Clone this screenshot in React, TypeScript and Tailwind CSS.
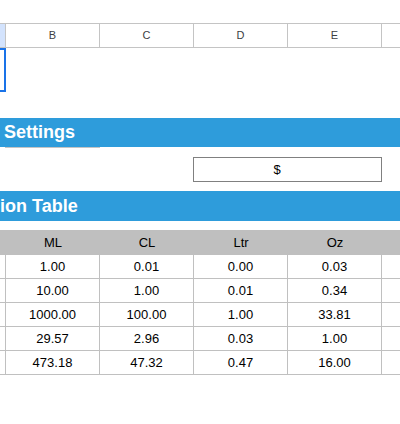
const cols = ['B', 'C', 'D', 'E'];

const units = ['ML', 'CL', 'Ltr', 'Oz'];

const rows = [
  ['1.00', '0.01', '0.00', '0.03'],
  ['10.00', '1.00', '0.01', '0.34'],
  ['1000.00', '100.00', '1.00', '33.81'],
  ['29.57', '2.96', '0.03', '1.00'],
  ['473.18', '47.32', '0.47', '16.00'],
];

export default function App() {
  return (
    <div
      className="w-[400px] h-[424px] bg-white overflow-hidden flex flex-col text-black"
      style={{ fontFamily: '"Liberation Sans", Arial, sans-serif' }}
    >
      <div className="h-[23px]" />

      {/* column letters */}
      <div className="h-[25px] flex border-y border-[#c4c4c4] text-[11px] text-[#3c4043]">
        <div className="w-[6px] bg-[#d3e3fd] border-r border-[#c4c4c4]" />
        {cols.map((c) => (
          <div key={c} className="w-[94px] border-r border-[#c4c4c4] flex items-center justify-center">
            {c}
          </div>
        ))}
        <div className="flex-1" />
      </div>

      {/* row 1 with selected cell */}
      <div className="h-[44px] flex">
        <div className="w-[6px] border-2 border-l-0 border-[#1a73e8]" />
      </div>
      <div className="h-[26px]" />

      {/* settings band */}
      <div className="h-[29px] bg-[#2e9cdb] flex items-center pl-[4px] text-white text-[18px] font-bold">
        Settings
      </div>
      <div className="h-[1px] flex">
        <div className="w-[5px]" />
        <div className="w-[95px] bg-[#c4c4c4]" />
      </div>

      <div className="h-[43px] flex items-center">
        <div className="w-[193px]" />
        <div className="w-[189px] h-[25px] border border-[#808080] flex items-center justify-center pr-[21px] text-[13px]">
          $
        </div>
      </div>

      {/* conversion table band */}
      <div className="h-[30px] bg-[#2e9cdb] flex items-center text-white text-[18px] font-bold">
        ion Table
      </div>
      <div className="h-[9px]" />

      {/* table header */}
      <div className="h-[25px] flex bg-[#bfbfbf] text-[13px]">
        <div className="w-[6px]" />
        {units.map((u) => (
          <div key={u} className="w-[94px] flex items-center justify-center">
            {u}
          </div>
        ))}
        <div className="flex-1" />
      </div>

      {rows.map((r, i) => (
        <div key={i} className="h-[24px] flex border-b border-[#c0c0c0] text-[13px]">
          <div className="w-[6px] border-r border-[#c0c0c0]" />
          {r.map((v, j) => (
            <div key={j} className="w-[94px] border-r border-[#c0c0c0] flex items-center justify-center">
              {v}
            </div>
          ))}
          <div className="flex-1" />
        </div>
      ))}
    </div>
  );
}
